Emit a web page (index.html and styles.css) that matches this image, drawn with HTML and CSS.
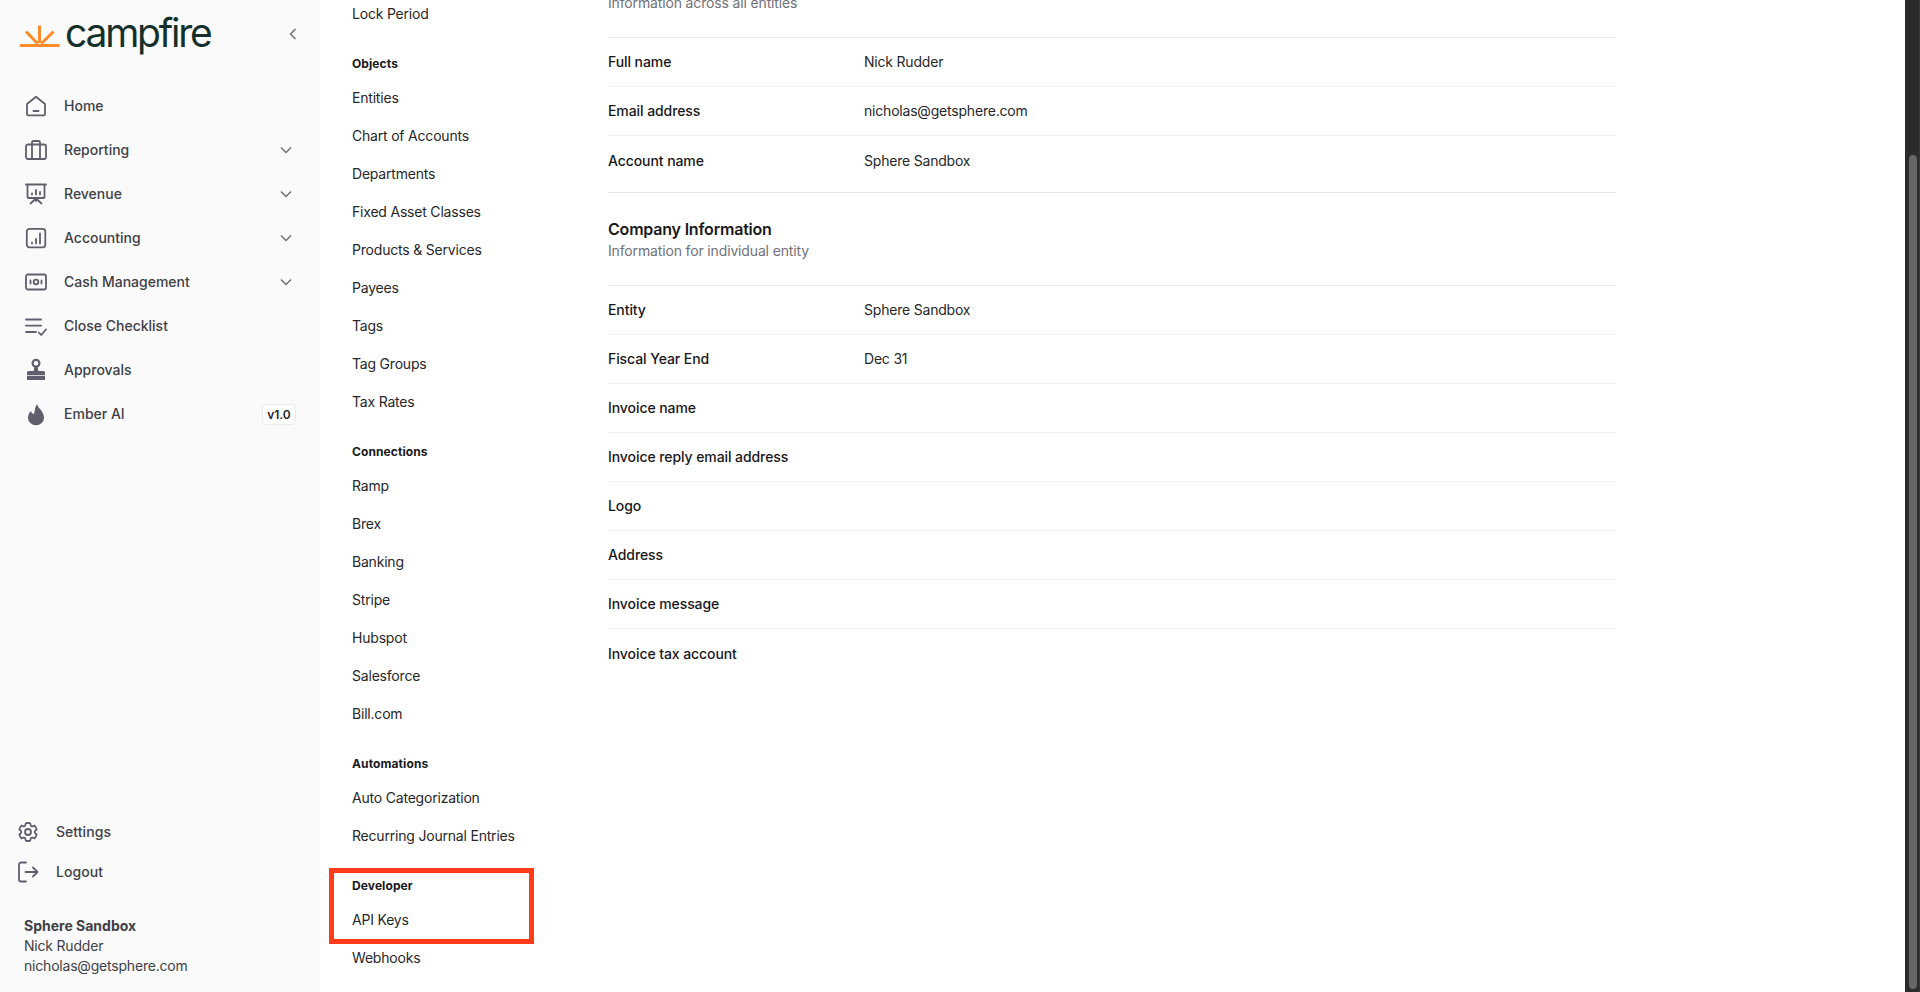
FILE: index.html
```html
<!DOCTYPE html>
<html lang="en">
<head>
<meta charset="utf-8">
<title>Campfire Settings</title>
<link rel="stylesheet" href="styles.css">
</head>
<body>
<div class="app">
  <aside class="sidebar">
    <div class="brand">
      <svg class="sun" viewBox="0 0 40 24" width="40" height="24"><path d="M0 21.500H39.500M19.500 1.500V19M6 7.500L17.500 19.500M33.500 7.500L21.500 19.500"/></svg>
      <span class="wordmark">campfire</span>
      <svg class="collapse" viewBox="0 0 8 12" width="8" height="12"><path d="M6.500 1L1.500 6l5 5"/></svg>
    </div>
    <nav class="nav">
      <a class="nav-row"><svg class="ico" viewBox="0 0 24 24"><path d="M12 2.800L21 10v10a1.300 1.300 0 0 1-1.300 1.300H4.300A1.300 1.300 0 0 1 3 20V10zM9.500 17h5"/></svg><span class="nav-label">Home</span></a>
      <a class="nav-row"><svg class="ico" viewBox="0 0 24 24"><rect x="2" y="6.500" width="20" height="14.500" rx="2"/><path d="M8 21V4.500A1.500 1.500 0 0 1 9.500 3h5A1.500 1.500 0 0 1 16 4.500V21"/></svg><span class="nav-label">Reporting</span><svg class="chev" viewBox="0 0 12 8"><path d="M1 1.500l5 5 5-5"/></svg></a>
      <a class="nav-row"><svg class="ico" viewBox="0 0 24 24"><path d="M2 2.500h20M3.500 3v12a1 1 0 0 0 1 1h15a1 1 0 0 0 1-1V3M8 11.500v1M12 8v4.500M16 10v2.500M12 16v3M12 16.500L6.500 21.500M12 16.500l5.500 5"/></svg><span class="nav-label">Revenue</span><svg class="chev" viewBox="0 0 12 8"><path d="M1 1.500l5 5 5-5"/></svg></a>
      <a class="nav-row"><svg class="ico" viewBox="0 0 24 24"><rect x="2.800" y="2.800" width="18.500" height="18.500" rx="2.500"/><path d="M8 17.500v-1M12 17.500v-4.500M16 17.500V7.500"/></svg><span class="nav-label">Accounting</span><svg class="chev" viewBox="0 0 12 8"><path d="M1 1.500l5 5 5-5"/></svg></a>
      <a class="nav-row"><svg class="ico" viewBox="0 0 24 24"><rect x="2" y="4.500" width="20" height="15" rx="2"/><circle cx="12" cy="12" r="2.300"/><path d="M6.500 10.500v3M17.500 10.500v3"/></svg><span class="nav-label">Cash Management</span><svg class="chev" viewBox="0 0 12 8"><path d="M1 1.500l5 5 5-5"/></svg></a>
      <a class="nav-row"><svg class="ico" viewBox="0 0 24 24"><path d="M2 5.500h15M2 11.700h15M2 18h10M14.800 18.500l2.400 2.500 4.800-5.500"/></svg><span class="nav-label">Close Checklist</span></a>
      <a class="nav-row"><svg class="ico" viewBox="0 0 24 24"><circle cx="12" cy="5.200" r="3.400" stroke-width="2.200"/><path class="solid" d="M10.400 8h3.200l.7 5H19.500A1.500 1.500 0 0 1 21 14.500V17H3v-2.500A1.500 1.500 0 0 1 4.500 13h5.200zM3 17.800h18V22H3z"/></svg><span class="nav-label">Approvals</span></a>
      <a class="nav-row"><svg class="ico" viewBox="0 0 24 24"><path class="solid" d="M13 2c.6 4 7 7 7 13.700A8 7.500 0 0 1 4 15.700c0-3 1.500-5.200 3-6.700.5 2 1.500 3 3 3 1-3 .5-6.500 3-10z"/></svg><span class="nav-label">Ember AI</span><span class="badge">v1.0</span></a>
    </nav>
    <div class="side-bottom">
      <a class="util-row"><svg class="ico" viewBox="0 0 24 24"><path d="M9.594 3.940c.090-.542.560-.940 1.110-.940h2.593c.550 0 1.020.398 1.110.940l.213 1.281c.063.374.313.686.645.870.074.040.147.083.220.127.325.196.720.257 1.075.124l1.217-.456a1.125 1.125 0 0 1 1.370.490l1.296 2.247a1.125 1.125 0 0 1-.260 1.431l-1.003.827c-.293.241-.438.613-.430.992a7.723 7.723 0 0 1 0 .255c-.008.378.137.750.430.991l1.004.827c.424.350.534.955.260 1.430l-1.298 2.247a1.125 1.125 0 0 1-1.369.491l-1.217-.456c-.355-.133-.750-.072-1.076.124a6.470 6.470 0 0 1-.220.128c-.331.183-.581.495-.644.869l-.213 1.281c-.090.543-.560.940-1.110.940h-2.594c-.550 0-1.019-.398-1.110-.940l-.213-1.281c-.062-.374-.312-.686-.644-.870a6.520 6.520 0 0 1-.220-.127c-.325-.196-.720-.257-1.076-.124l-1.217.456a1.125 1.125 0 0 1-1.369-.490l-1.297-2.247a1.125 1.125 0 0 1 .260-1.431l1.004-.827c.292-.240.437-.613.430-.991a6.932 6.932 0 0 1 0-.255c.007-.380-.138-.751-.430-.992l-1.004-.827a1.125 1.125 0 0 1-.260-1.430l1.297-2.247a1.125 1.125 0 0 1 1.370-.491l1.216.456c.356.133.751.072 1.076-.124.072-.044.146-.086.220-.128.332-.183.582-.495.644-.869l.214-1.280Z"/><circle cx="12" cy="12" r="3"/></svg><span>Settings</span></a>
      <a class="util-row"><svg class="ico" viewBox="0 0 24 24"><path d="M10 2.500H5a2 2 0 0 0-2 2v15a2 2 0 0 0 2 2h5M9.500 12h12M17 7.500l4.500 4.500-4.500 4.500"/></svg><span>Logout</span></a>
      <div class="account">
        <div class="account-org">Sphere Sandbox</div>
        <div>Nick Rudder</div>
        <div>nicholas@getsphere.com</div>
      </div>
    </div>
  </aside>

  <nav class="subnav">
    <div class="subnav-group first">
      <a class="sub-item">Lock Period</a>
    </div>
    <div class="subnav-group">
      <div class="sub-head">Objects</div>
      <a class="sub-item">Entities</a>
      <a class="sub-item">Chart of Accounts</a>
      <a class="sub-item">Departments</a>
      <a class="sub-item">Fixed Asset Classes</a>
      <a class="sub-item">Products &amp; Services</a>
      <a class="sub-item">Payees</a>
      <a class="sub-item">Tags</a>
      <a class="sub-item">Tag Groups</a>
      <a class="sub-item">Tax Rates</a>
    </div>
    <div class="subnav-group">
      <div class="sub-head">Connections</div>
      <a class="sub-item">Ramp</a>
      <a class="sub-item">Brex</a>
      <a class="sub-item">Banking</a>
      <a class="sub-item">Stripe</a>
      <a class="sub-item">Hubspot</a>
      <a class="sub-item">Salesforce</a>
      <a class="sub-item">Bill.com</a>
    </div>
    <div class="subnav-group">
      <div class="sub-head">Automations</div>
      <a class="sub-item">Auto Categorization</a>
      <a class="sub-item">Recurring Journal Entries</a>
    </div>
    <div class="subnav-group">
      <div class="sub-head">Developer</div>
      <a class="sub-item">API Keys</a>
      <a class="sub-item">Webhooks</a>
    </div>
  </nav>

  <main class="main">
    <div class="content">
      <p class="section-sub">Information across all entities</p>
      <div class="rows">
        <div class="row"><span class="row-label">Full name</span><span>Nick Rudder</span></div>
        <div class="row"><span class="row-label">Email address</span><span>nicholas@getsphere.com</span></div>
        <div class="row"><span class="row-label">Account name</span><span>Sphere Sandbox</span></div>
      </div>
      <div class="section-end"></div>
      <h2 class="section-title">Company Information</h2>
      <p class="section-sub">Information for individual entity</p>
      <div class="rows">
        <div class="row"><span class="row-label">Entity</span><span>Sphere Sandbox</span></div>
        <div class="row"><span class="row-label">Fiscal Year End</span><span>Dec 31</span></div>
        <div class="row"><span class="row-label">Invoice name</span><span></span></div>
        <div class="row"><span class="row-label">Invoice reply email address</span><span></span></div>
        <div class="row"><span class="row-label">Logo</span><span></span></div>
        <div class="row"><span class="row-label">Address</span><span></span></div>
        <div class="row"><span class="row-label">Invoice message</span><span></span></div>
        <div class="row"><span class="row-label">Invoice tax account</span><span></span></div>
      </div>
    </div>
  </main>

  <div class="scrollbar"><div class="thumb"></div></div>
  <div class="highlight"></div>
</div>
</body>
</html>
```
FILE: styles.css
```css
* { box-sizing: border-box; }
html, body { margin: 0; height: 100%; overflow: hidden; }
body {
  font-family: Inter, "Liberation Sans", sans-serif;
  font-size: 14px;
  line-height: 20px;
  letter-spacing: -0.2px;
  color: #18181b;
  background: #fff;
}
.app { position: relative; display: flex; height: 992px; overflow: hidden; }

.sidebar {
  flex: 0 0 320px;
  display: flex;
  flex-direction: column;
  background: #fafafa;
  color: #3f3f46;
}
.brand {
  display: flex;
  align-items: center;
  height: 84px;
  padding: 0 20px 18px;
}
.sun { flex: none; margin-top: 5px; fill: none; stroke: #ff8a2a; stroke-width: 3; }
.wordmark {
  margin-left: 5px;
  font-size: 39px;
  line-height: 48px;
  letter-spacing: -2.2px;
  color: #15302a;
}
.collapse { margin-left: auto; margin-right: 3px; margin-top: 2px; fill: none; stroke: #6b6b78; stroke-width: 1.5; }
.nav { display: flex; flex-direction: column; }
.nav-row {
  display: flex;
  align-items: center;
  height: 44px;
  padding: 0 24px;
  gap: 16px;
  font-weight: 500;
  letter-spacing: 0;
}
.nav-label { flex: 1; }
.ico { flex: none; width: 24px; height: 24px; fill: none; stroke: #5f5f6e; stroke-width: 1.8; stroke-linecap: round; stroke-linejoin: round; }
.ico .solid { fill: #5f5f6e; stroke: none; }
.chev { flex: none; width: 12px; height: 8px; margin-right: 4px; fill: none; stroke: #6b6b78; stroke-width: 1.4; }
.badge {
  flex: none;
  width: 34px;
  height: 21px;
  border: 1px solid #ececf0;
  border-radius: 4px;
  background: #fff;
  text-align: center;
  font-size: 12px;
  line-height: 19px;
  font-weight: 600;
  color: #27272a;
}
.side-bottom { margin-top: auto; padding-bottom: 16px; }
.util-row {
  display: flex;
  align-items: center;
  height: 40px;
  padding: 0 16px;
  gap: 16px;
  font-weight: 500;
  letter-spacing: 0.05px;
}
.account { margin-top: 24px; padding: 0 24px; }
.account-org { font-weight: 700; letter-spacing: 0; }

.subnav {
  flex: 0 0 288px;
  margin-top: -5px;
  padding-left: 32px;
}
.subnav-group { padding-top: 21px; }
.subnav-group.first { padding-top: 0; }
.sub-head {
  margin-bottom: 5px;
  font-size: 12px;
  line-height: 20px;
  font-weight: 700;
  letter-spacing: 0.1px;
  color: #18181b;
}
.sub-item { display: flex; align-items: center; height: 38px; color: #27272a; }

.main { flex: 1; min-width: 0; }
.content { width: 1008px; margin-top: -7px; }
.section-title { margin: 24px 0 0; font-size: 16px; line-height: 24px; font-weight: 600; letter-spacing: -0.2px; }
.section-sub { margin: 0 0 24px; color: #71717a; letter-spacing: -0.15px; }
.rows { border-top: 1px solid #e4e4e7; }
.row {
  display: flex;
  align-items: center;
  height: 49px;
  border-bottom: 1px solid #f1f1f3;
  color: #27272a;
}
.row:last-child { border-bottom: 0; }
.row-label { flex: 0 0 256px; font-weight: 500; letter-spacing: -0.08px; color: #18181b; }
.section-end { margin-top: 7px; border-top: 1px solid #e4e4e7; }

.scrollbar {
  flex: 0 0 15px;
  display: flex;
  padding: 155px 2px 3px 4px;
  background: #2b2b2b;
  border-right: 1px solid #3a3a3a;
}
.thumb { flex: 1; border-radius: 4px; background: #666; }

.highlight {
  position: absolute;
  left: 329px;
  top: 868px;
  width: 205px;
  height: 76px;
  border: 5px solid #ff3b1a;
  pointer-events: none;
}
```
